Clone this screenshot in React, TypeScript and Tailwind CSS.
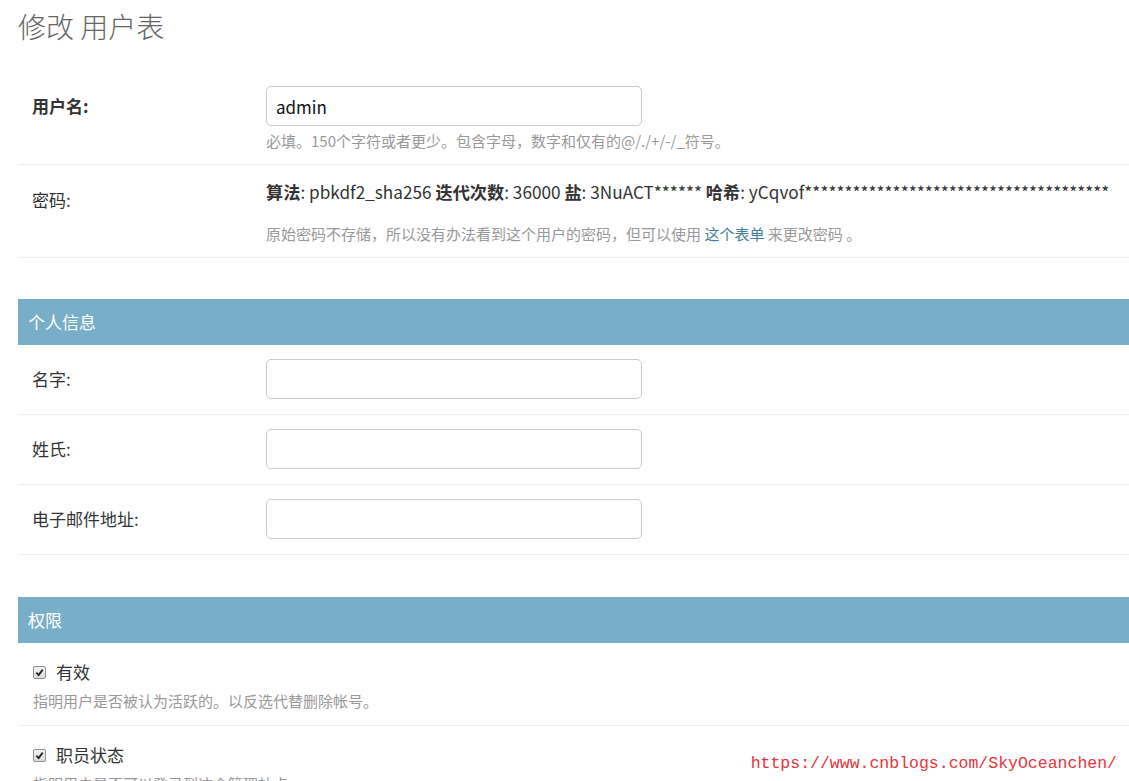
import { useState } from 'react';

const Check = ({ label, help, defaultChecked = true }: { label: string; help: string; defaultChecked?: boolean }) => {
    const [checked, setChecked] = useState(defaultChecked);

    return (
        <div className="border-b border-[#eee] pt-[17px] pb-[14px] pl-[15px]">
            <label className="flex cursor-pointer items-center gap-[10px] text-[17px] leading-[24px] text-[#333]">
                <span
                    onClick={() => setChecked(!checked)}
                    className="flex h-[13px] w-[13px] items-center justify-center rounded-[2px] border border-[#8f8f8f] bg-gradient-to-b from-[#f4f4f4] to-[#dcdcdc]"
                >
                    {checked && (
                        <svg viewBox="0 0 10 10" className="h-[9px] w-[9px]">
                            <path d="M1.5 5.2 L4 7.8 L8.6 1.8" fill="none" stroke="#222" strokeWidth={2} />
                        </svg>
                    )}
                </span>
                {label}
            </label>
            <p className="mt-[7px] text-[15px] leading-[20px] text-[#999]">{help}</p>
        </div>
    );
};

const TextRow = ({ label, value = '' }: { label: string; value?: string }) => (
    <div className="flex border-b border-[#eee] pt-[14px] pb-[15px]">
        <label className="w-[248px] pl-[14px] text-[17px] leading-[40px] text-[#333]">{label}:</label>
        <input
            defaultValue={value}
            className="h-[40px] w-[376px] rounded-[5px] border border-[#ccc] px-[10px] text-[17px] text-[#111] outline-none"
        />
    </div>
);

const SectionHeader = ({ title }: { title: string }) => (
    <h2 className="flex h-[46px] items-center bg-[#79aec8] px-[10px] text-[17px] text-white">{title}</h2>
);

export default function App() {
    const hashStars = '*'.repeat(38);

    return (
        <div className="relative min-h-screen bg-white pl-[18px] font-['Noto_Sans_CJK_SC','Noto_Sans',sans-serif]">
            <h1 className="pt-[8px] text-[28px] leading-[36px] font-light text-[#666]">修改 用户表</h1>

            <fieldset className="mt-[29px] mb-[41px]">
                {/* 用户名 */}
                <div className="flex border-b border-[#eee] pt-[13px] pb-[13px]">
                    <label className="w-[248px] pl-[14px] text-[17px] leading-[40px] font-bold text-[#333]">用户名:</label>
                    <div>
                        <input
                            defaultValue="admin"
                            className="h-[40px] w-[376px] rounded-[5px] border border-[#ccc] px-[9px] text-[17px] text-[#111] outline-none"
                        />
                        <p className="mt-[5px] text-[15px] leading-[20px] text-[#999]">
                            必填。150个字符或者更少。包含字母，数字和仅有的@/./+/-/_符号。
                        </p>
                    </div>
                </div>

                {/* 密码 */}
                <div className="flex border-b border-[#eee] pt-[15px] pb-[13px]">
                    <label className="w-[248px] pt-[8px] pl-[14px] text-[17px] leading-[24px] text-[#333]">密码:</label>
                    <div>
                        <div className="text-[17.2px] leading-[24px] whitespace-nowrap text-[#333]">
                            <strong>算法</strong>: pbkdf2_sha256 <strong>迭代次数</strong>: 36000 <strong>盐</strong>: 3NuACT******{' '}
                            <strong>哈希</strong>: yCqvof{hashStars}
                        </div>
                        <p className="mt-[20px] text-[15px] leading-[20px] text-[#999]">
                            原始密码不存储，所以没有办法看到这个用户的密码，但可以使用{' '}
                            <a href="#password" className="text-[#447e9b]">
                                这个表单
                            </a>{' '}
                            来更改密码 。
                        </p>
                    </div>
                </div>
            </fieldset>

            <fieldset className="mb-[42px]">
                <SectionHeader title="个人信息" />
                <TextRow label="名字" />
                <TextRow label="姓氏" />
                <TextRow label="电子邮件地址" />
            </fieldset>

            <fieldset>
                <SectionHeader title="权限" />
                <Check label="有效" help="指明用户是否被认为活跃的。以反选代替删除帐号。" />
                <Check label="职员状态" help="指明用户是否可以登录到这个管理站点。" />
                <Check label="超级用户状态" help="指明该用户缺省拥有所有权限。" defaultChecked={false} />
            </fieldset>

            <div className="fixed right-[10px] bottom-[5px] bg-white px-[2px] font-['Liberation_Mono',monospace] text-[16.5px] leading-[24px] text-[#e8343c]">
                https://www.cnblogs.com/SkyOceanchen/
            </div>
        </div>
    );
}
